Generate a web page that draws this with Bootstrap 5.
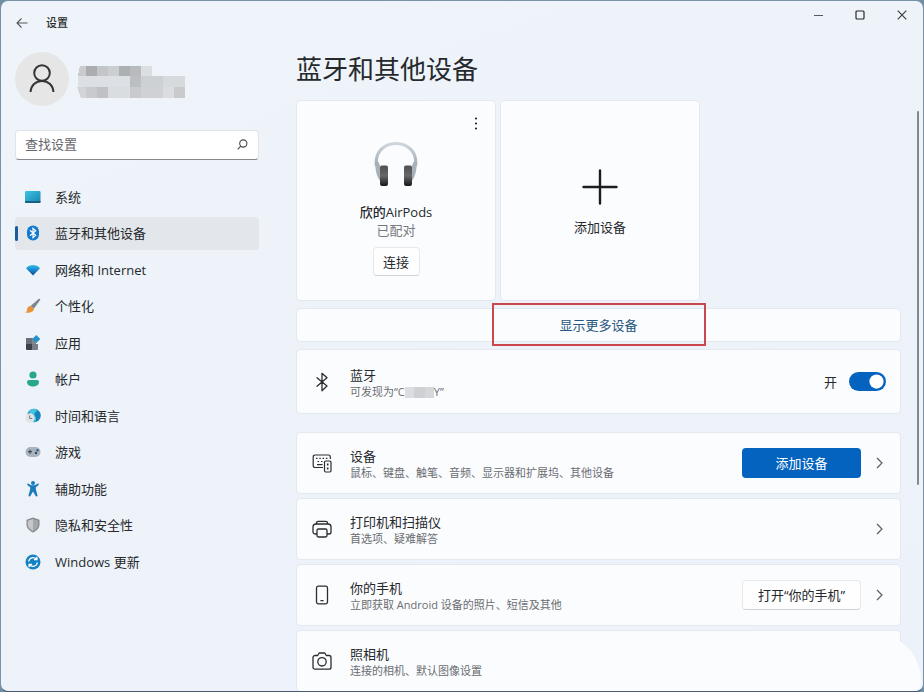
<!DOCTYPE html>
<html lang="zh-CN">
<head>
<meta charset="utf-8">
<meta name="viewport" content="width=device-width, initial-scale=1">
<title>设置</title>
<link rel="stylesheet" href="https://cdn.jsdelivr.net/npm/bootstrap@5.3.0/dist/css/bootstrap.min.css">
<style>
  :root { --ink: #26292c; --soft: #6a6d71; --accent: #0463be; --panel: #fbfcfe; --line: #e4e8ef; }
  body { font-family: "Open Sans", "Noto Sans CJK SC", sans-serif; font-size: 13px; line-height: 18px; color: var(--ink); background: #6f8fa5; }
  .app-window { height: 100vh; border: 1px solid #7793a6; border-bottom-color: #4c5870; border-radius: 8px; background: linear-gradient(160deg, #eef4f9 0%, #edf3f8 40%, #eef2fa 70%, #edf2fa 100%); }
  .title-bar { height: 44px; padding-left: 15px; }
  .title-text { font-size: 11px; font-weight: 500; margin-left: 18px; }
  .win-btn { border: 0; background: none; padding: 0; color: var(--ink); line-height: 0; }
  .side-pane { width: 258px; padding-left: 14px; padding-top: 7px; }
  .avatar { width: 54px; height: 54px; background: #e7e6e6; }
  .name-mosaic { margin-top: 5px; }
  .search-box { margin-top: 24px; height: 30px; background: #fff; border: 1px solid #e0e4ea; border-bottom-color: #85888c; border-radius: 4px; padding: 0 10px 2px 9px; }
  .search-box input { border: 0; background: none; outline: 0; min-width: 0; color: var(--ink); padding: 0; }
  .search-box input::placeholder { color: #64676b; opacity: 1; }
  .side-nav { margin-top: 20px; min-height: 398px; }
  .side-nav .nav-link { height: 33px; padding: 0 9px; gap: 13px; color: var(--ink); border-radius: 4px; position: relative; }
  .side-nav .nav-link.active { background: #e3e6eb; }
  .side-nav .nav-link.active::before { content: ""; position: absolute; left: 0; top: 9px; width: 3px; height: 15px; border-radius: 2px; background: #1a5c9e; }
  .main-pane { padding: 7px 22px 0 37px; }
  .page-title { font-size: 26px; line-height: 34px; margin-bottom: 14px; font-weight: 400; }
  .panel { background: var(--panel); border: 1px solid var(--line); border-radius: 4px; }
  .tile { width: 200px; height: 201px; }
  .tile-gap { gap: 4px; }
  .kebab { position: absolute; top: 14px; right: 10px; width: 18px; height: 18px; }
  .paired { padding-top: 40px; }
  .paired-art { margin-bottom: 16px; }
  .device-name { font-weight: 500; line-height: 18px; }
  .device-state { line-height: 18px; color: #75787c; }
  .plain-btn { background: #fefefe; border: 1px solid #e6e8eb; border-bottom-color: #d0d3d7; border-radius: 4px; color: var(--ink); font-size: 13px; line-height: 18px; padding: 0; height: 29px; }
  .connect-btn { width: 47px; margin-top: 8px; }
  .row-btn { width: 119px; height: 30px; font-size: 13px; line-height: 18px; padding: 0; border-radius: 4px; }
  .btn-accent, .btn-accent:hover { background: var(--accent); color: #fff; }
  .add-tile { color: var(--ink); gap: 13px; padding-top: 4px; }
  .more-row { height: 34px; margin-top: 7px; }
  .more-row a { color: #265780; }
  .callout-frame { position: absolute; top: -6px; bottom: -5px; left: 50%; width: 214px; transform: translateX(-50%); border: 2px solid #c9484b; pointer-events: none; }
  .setting { padding: 0 15px; gap: 18px; min-height: 62px; }
  .setting-bt { min-height: 65px; margin: 7px 0 18px; }
  .setting-list { gap: 4px; }
  .setting h2 { font-size: 13px; line-height: 17px; margin: 0; font-weight: 400; }
  .setting p { font-size: 11px; line-height: 15px; margin: 0; color: var(--soft); }
  .setting-copy { padding-top: 2px; }
  .tail { gap: 12px; }
  .switch-tail { margin-right: -1px; }
  .switch-in.form-check-input { width: 37px; height: 19px; margin: 0; border: 0; background-color: var(--accent); }
  .scroll-thumb { position: absolute; right: 4px; top: 110px; width: 2px; height: 374px; border-radius: 1px; background: #85898f; }
  .corner-glow { position: absolute; right: 2px; bottom: 0; width: 60px; height: 58px; border-radius: 0 48px 8px 0; background: var(--panel); }
  svg { display: block; flex: none; }
  .hint-name svg { display: inline-block; vertical-align: middle; }
</style>
<script src="https://cdn.jsdelivr.net/npm/bootstrap@5.3.0/dist/js/bootstrap.bundle.min.js"></script>
</head>
<body>
<div class="app-window position-relative overflow-hidden d-flex flex-column">
  <header class="title-bar d-flex align-items-center flex-shrink-0">
    <button class="win-btn" aria-label="返回"><svg width="12" height="12" viewBox="0 0 12 12" fill="none" stroke="#54585c" stroke-width="1.1"><path d="M11.5 6H1M5.5 1.5L1 6l4.500 4.500"/></svg></button>
    <span class="title-text">设置</span>
    <div class="ms-auto d-flex align-items-center pb-3 me-3">
      <button class="win-btn me-4" aria-label="最小化"><svg width="18" height="10" viewBox="0 0 18 10" stroke="#55595d"><path d="M5 5.500h9"/></svg></button>
      <button class="win-btn me-4 ps-1" aria-label="最大化"><svg width="10" height="10" viewBox="0 0 10 10" fill="none" stroke="#26292c" stroke-width="1.200"><rect x="1" y="1" width="8" height="8" rx="1"/></svg></button>
      <button class="win-btn ps-2" aria-label="关闭"><svg width="10" height="10" viewBox="0 0 10 10" stroke="#35383b" stroke-width="1.100"><path d="M.7.7l8.600 8.600M9.300.7L.7 9.300"/></svg></button>
    </div>
  </header>

  <div class="d-flex flex-grow-1 overflow-hidden">
    <aside class="side-pane flex-shrink-0">
      <div class="d-flex align-items-center gap-2">
        <div class="avatar rounded-circle d-flex align-items-center justify-content-center"><svg width="28" height="32" viewBox="0 0 28 32" fill="none" stroke="#333537" stroke-width="2"><circle cx="14" cy="10" r="7.800"/><path d="M2.500 29c.5-6.500 5-11 11.500-11s11 4.500 11.500 11"/></svg></div>
        <svg class="name-mosaic" width="108" height="34" viewBox="0 0 108 34" shape-rendering="crispEdges">
          <path fill="#c9cbce" d="M3 1h6v10H1z"/><path fill="#abadb0" d="M9 1h11v10H9z"/><path fill="#c3c5c8" d="M20 1h11v10H20z"/><path fill="#cccfd2" d="M31 1h11v10H31z"/><path fill="#adafb2" d="M42 1h11v10H42z"/><path fill="#b8babd" d="M53 1h11v10H53z"/><path fill="#dcdfe2" d="M64 1h11v10H64z"/>
          <path fill="#dcdfe3" d="M1 11h52v11H1z"/><path fill="#bcbfc2" d="M53 11h11v11H53z"/><path fill="#ced1d4" d="M64 11h22v11H64z"/><path fill="#d7dadd" d="M86 11h22v11H86z"/>
          <path fill="#d2d4d7" d="M0 22h9v11H4z"/><path fill="#c8cacd" d="M9 22h11v11H9z"/><path fill="#bfc1c4" d="M20 22h11v11H20z"/><path fill="#dadde0" d="M31 22h22v11H31z"/><path fill="#c8cacd" d="M53 22h11v11H53z"/><path fill="#cfd1d5" d="M64 22h22v11H64z"/><path fill="#dadce0" d="M86 22h11v11H86z"/><path fill="#cac9cc" d="M97 22h11v11H97z"/>
        </svg>
      </div>
      <div class="search-box d-flex align-items-center">
        <input class="flex-grow-1" type="text" placeholder="查找设置" aria-label="查找设置">
        <svg width="11" height="11" viewBox="0 0 11 11" fill="none" stroke="#45484c" stroke-width="1.100"><circle cx="6.300" cy="4.500" r="3.600"/><path d="M3.800 7.200L.7 10.300"/></svg>
      </div>
      <nav class="side-nav nav flex-column justify-content-between flex-nowrap">
        <a href="#" class="nav-link d-flex align-items-center"><svg width="18" height="18" viewBox="0 0 18 18"><defs><linearGradient id="g1" x2="1" y2="1"><stop stop-color="#3cc4e4"/><stop offset="1" stop-color="#1784ad"/></linearGradient></defs><rect x="1" y="3" width="15.500" height="12" rx="1.200" fill="url(#g1)"/><path d="M1 13h15.500v1a1 1 0 0 1-1 1H2a1 1 0 0 1-1-1z" fill="#17607f"/></svg>系统</a>
        <a href="#" class="nav-link active d-flex align-items-center" aria-current="page"><svg width="18" height="18" viewBox="0 0 18 18"><rect x="3" y="1.500" width="12" height="15" rx="6" fill="#1379ce"/><path d="M6 6.200l5.700 5.100L9 13.700V4.300l2.700 2.400L6 11.800" fill="none" stroke="#fff" stroke-width="1.200"/></svg>蓝牙和其他设备</a>
        <a href="#" class="nav-link d-flex align-items-center"><svg width="18" height="18" viewBox="0 0 18 18"><defs><linearGradient id="g2" x2="0" y2="1"><stop stop-color="#36bde9"/><stop offset=".5" stop-color="#1684cf"/><stop offset="1" stop-color="#104d8e"/></linearGradient></defs><path d="M2 7.200C5.500 2.900 12.500 2.900 16 7.200L9 14.500z" fill="url(#g2)"/></svg>网络和 Internet</a>
        <a href="#" class="nav-link d-flex align-items-center"><svg width="18" height="18" viewBox="0 0 18 18"><path d="M14.300 2.200c1.500-1.200 2.600 0 1.500 1.400L9.800 11.800 6.500 9z" fill="#7d8590"/><path d="M6.500 9l3.300 2.800c.2 3.200-3.800 4.400-8.500 3.900 1.600-.8 1.400-1.800 1.800-3.600.5-2 1.800-3.200 3.400-3.100z" fill="#e99439"/></svg>个性化</a>
        <a href="#" class="nav-link d-flex align-items-center"><svg width="18" height="18" viewBox="0 0 18 18"><path d="M2 4h6v6H2z" fill="#6a7079"/><path d="M2 10h6v6H3a1 1 0 0 1-1-1z" fill="#3c4149"/><path d="M8 10h6v5a1 1 0 0 1-1 1H8z" fill="#777d87"/><path d="M8 4h4v6H8z" fill="#80878f"/><path d="M12.300 1l4 4-4 4-4-4z" fill="#2590cc"/></svg>应用</a>
        <a href="#" class="nav-link d-flex align-items-center"><svg width="18" height="18" viewBox="0 0 18 18" fill="#27a88c"><circle cx="9" cy="5" r="3.600"/><path d="M5 10h8a2 2 0 0 1 2 2c0 3-3 4.500-6 4.500S3 15 3 12a2 2 0 0 1 2-2z"/></svg>帐户</a>
        <a href="#" class="nav-link d-flex align-items-center"><svg width="18" height="18" viewBox="0 0 18 18"><circle cx="10" cy="8.500" r="6.800" fill="#1784bd"/><path d="M5 4c3-3.500 8-2.500 8-.5 0 1.500-3 1.700-2.500 4s2 2.500 1.500 5-2 2.500-3 2.500z" fill="#46c4dd"/><circle cx="6" cy="11" r="4.700" fill="#e0e3e6"/><path d="M5.700 8.500V11.500h2.500" fill="none" stroke="#737980"/></svg>时间和语言</a>
        <a href="#" class="nav-link d-flex align-items-center"><svg width="18" height="18" viewBox="0 0 18 18"><rect x="1.500" y="4" width="15" height="10" rx="5" fill="#a9b3bf"/><path d="M4 8.700h4M6 6.700v4" stroke="#434b56" stroke-width="1.200"/><circle cx="12" cy="10" r="1.200" fill="#3a4b60"/><circle cx="13.500" cy="7.300" r="1.200" fill="#2c6491"/></svg>游戏</a>
        <a href="#" class="nav-link d-flex align-items-center"><svg width="18" height="18" viewBox="0 0 18 18" fill="#1b7cba"><circle cx="9" cy="3" r="2"/><path d="M3.300 3.800c.5-.7 1.200-.4 1.700.1C6.500 5.600 11.500 5.600 13 3.900c.5-.5 1.200-.8 1.700-.1.400.7-.2 1.300-.7 1.700L11.700 7.500l.3 2.500 1.500 5.200c.2 1.300-1.400 1.800-2 .6L9 11.500l-2.500 4.300c-.6 1.200-2.200.7-2-.6L6 10l.3-2.500L4 5.500c-.5-.4-1.100-1-.7-1.700z"/></svg>辅助功能</a>
        <a href="#" class="nav-link d-flex align-items-center"><svg width="18" height="18" viewBox="0 0 18 18"><path d="M9 1.500l6.500 2.300v4.700c0 4-3.500 6.500-6.500 8-3-1.500-6.500-4-6.500-8V3.800z" fill="#86898d"/><path d="M9 3l5.200 1.800v3.700c0 3.200-2.700 5.100-5.200 6.400z" fill="#a5a8ab"/><path d="M9 3L3.800 4.800v3.700c0 3.200 2.700 5.100 5.200 6.400z" fill="#c5c7ca"/></svg>隐私和安全性</a>
        <a href="#" class="nav-link d-flex align-items-center"><svg width="18" height="18" viewBox="0 0 18 18"><circle cx="9" cy="9" r="7.500" fill="#1580c4"/><path d="M4.700 8.500A4.400 4.400 0 0 1 12.500 6.300M13.300 9.500A4.400 4.400 0 0 1 5.500 11.700M12.900 3.700V6.700H9.900M5.100 14.300V11.300H8.100" fill="none" stroke="#fff" stroke-width="1.300"/></svg>Windows 更新</a>
      </nav>
    </aside>

    <main class="main-pane flex-grow-1 overflow-hidden">
      <h1 class="page-title">蓝牙和其他设备</h1>
      <div class="tile-gap d-flex">
        <section class="panel tile paired position-relative d-flex flex-column align-items-center">
          <button class="win-btn kebab" aria-label="更多选项"><svg width="18" height="18" viewBox="0 0 18 18" fill="#26292c"><circle cx="9" cy="3.500" r="1.100"/><circle cx="9" cy="8.500" r="1.100"/><circle cx="9" cy="13.500" r="1.100"/></svg></button>
          <svg class="paired-art" width="44" height="46" viewBox="0 0 44 46"><defs><linearGradient id="g3" x2="0" y2="1"><stop stop-color="#4e4f51"/><stop offset=".5" stop-color="#66686a"/><stop offset="1" stop-color="#17181a"/></linearGradient><linearGradient id="g4" x2="0" y2="1"><stop stop-color="#ced5db"/><stop offset="1" stop-color="#a3adb5"/></linearGradient></defs><path d="M2.500 25C.5 10 11 2.500 22 2.500S43.500 10 41.500 25" fill="none" stroke="url(#g4)" stroke-width="3.200"/><path d="M1 21h3.500l2 5v14C3 37 1.500 30 1 21zM43 21h-3.500l-2 5v14c3.500-3 5-10 5.500-19z" fill="#a8b1b8"/><rect x="6" y="24.500" width="8" height="20.500" rx="2" fill="url(#g3)"/><rect x="30" y="24.500" width="8" height="20.500" rx="2" fill="url(#g3)"/></svg>
          <div class="device-name">欣的AirPods</div>
          <div class="device-state">已配对</div>
          <button class="plain-btn connect-btn">连接</button>
        </section>
        <button class="panel tile add-tile d-flex flex-column align-items-center justify-content-center">
          <svg width="36" height="36" viewBox="0 0 36 36" stroke="#1b1d1f" stroke-width="2.400" stroke-linecap="round"><path d="M18 1.500v33M1.500 18h33"/></svg>
          <span>添加设备</span>
        </button>
      </div>

      <div class="panel more-row position-relative d-flex align-items-center justify-content-center">
        <a href="#" class="text-decoration-none">显示更多设备</a>
        <span class="callout-frame"></span>
      </div>

      <section class="panel setting setting-bt d-flex align-items-center">
        <svg width="20" height="20" viewBox="0 0 20 20" fill="none" stroke="#2a2d30" stroke-width="1.300" stroke-linejoin="round" stroke-linecap="round"><path d="M5 5.800l10 8.200-5 4.700V1.300l5 4.500L5 14.200"/></svg>
        <div class="setting-copy flex-grow-1">
          <h2>蓝牙</h2>
          <p class="hint-name">可发现为“C<svg width="29" height="11" viewBox="0 0 29 11" shape-rendering="crispEdges"><path fill="#dcdde0" d="M0 0h9v11H0z"/><path fill="#cfd0d3" d="M9 0h11v11H9z"/><path fill="#d6d7da" d="M20 0h9v11H20z"/></svg>Y”</p>
        </div>
        <label class="tail switch-tail d-flex align-items-center form-switch p-0">
          <span>开</span>
          <input class="form-check-input switch-in" type="checkbox" role="switch" checked>
        </label>
      </section>

      <div class="setting-list d-flex flex-column">
        <section class="panel setting d-flex align-items-center">
          <svg width="20" height="20" viewBox="0 0 20 20" fill="none" stroke="#2a2d30" stroke-width="1.200"><path d="M11 14.500H3A1.800 1.800 0 0 1 1.200 12.700V3.800A1.800 1.800 0 0 1 3 2h13.500a1.800 1.800 0 0 1 1.800 1.800V6"/><path d="M4 5.300h12" stroke-dasharray="1.500 1.800"/><path d="M5.500 8.500h1.500M9 8.500h1.500M5 11.600h5.500"/><rect x="12.500" y="8" width="6.500" height="11" rx="1.200"/><path d="M15.700 10.500v2M15.700 14.500v2" stroke-width="1.600"/></svg>
          <div class="setting-copy flex-grow-1"><h2>设备</h2><p>鼠标、键盘、触笔、音频、显示器和扩展坞、其他设备</p></div>
          <div class="tail d-flex align-items-center"><button class="btn btn-accent row-btn">添加设备</button><svg width="12" height="14" viewBox="0 0 12 14" fill="none" stroke="#5a5d61" stroke-width="1.200"><path d="M4 2l5 5-5 5"/></svg></div>
        </section>
        <section class="panel setting d-flex align-items-center">
          <svg width="20" height="20" viewBox="0 0 20 20" fill="none" stroke="#2a2d30" stroke-width="1.300" stroke-linejoin="round"><path d="M5 15H3a2 2 0 0 1-2-2V8a3 3 0 0 1 3-3h12a3 3 0 0 1 3 3v5a2 2 0 0 1-2 2h-2"/><path d="M4.500 5V4A1.700 1.700 0 0 1 6.200 2.300h7.600A1.700 1.700 0 0 1 15.500 4v1"/><rect x="5" y="10" width="10" height="8" rx="1.400"/></svg>
          <div class="setting-copy flex-grow-1"><h2>打印机和扫描仪</h2><p>首选项、疑难解答</p></div>
          <svg width="12" height="14" viewBox="0 0 12 14" fill="none" stroke="#5a5d61" stroke-width="1.200"><path d="M4 2l5 5-5 5"/></svg>
        </section>
        <section class="panel setting d-flex align-items-center">
          <svg width="20" height="20" viewBox="0 0 20 20" fill="none" stroke="#2a2d30" stroke-width="1.300" stroke-linecap="round"><rect x="4.500" y="1.200" width="11" height="17.600" rx="1.800"/><path d="M9 15.700h2"/></svg>
          <div class="setting-copy flex-grow-1"><h2>你的手机</h2><p>立即获取 Android 设备的照片、短信及其他</p></div>
          <div class="tail d-flex align-items-center"><button class="plain-btn row-btn">打开“你的手机”</button><svg width="12" height="14" viewBox="0 0 12 14" fill="none" stroke="#5a5d61" stroke-width="1.200"><path d="M4 2l5 5-5 5"/></svg></div>
        </section>
        <section class="panel setting d-flex align-items-center">
          <svg width="20" height="20" viewBox="0 0 20 20" fill="none" stroke="#2a2d30" stroke-width="1.300" stroke-linejoin="round"><path d="M3 4.500h2.700L7.200 2h5.600l1.500 2.500H17a2 2 0 0 1 2 2v9.700a2 2 0 0 1-2 2H3a2 2 0 0 1-2-2V6.500a2 2 0 0 1 2-2z"/><circle cx="10" cy="10.800" r="4.200"/></svg>
          <div class="setting-copy flex-grow-1"><h2>照相机</h2><p>连接的相机、默认图像设置</p></div>
        </section>
      </div>
    </main>
  </div>
  <div class="scroll-thumb"></div>
  <div class="corner-glow"></div>
</div>
</body>
</html>
